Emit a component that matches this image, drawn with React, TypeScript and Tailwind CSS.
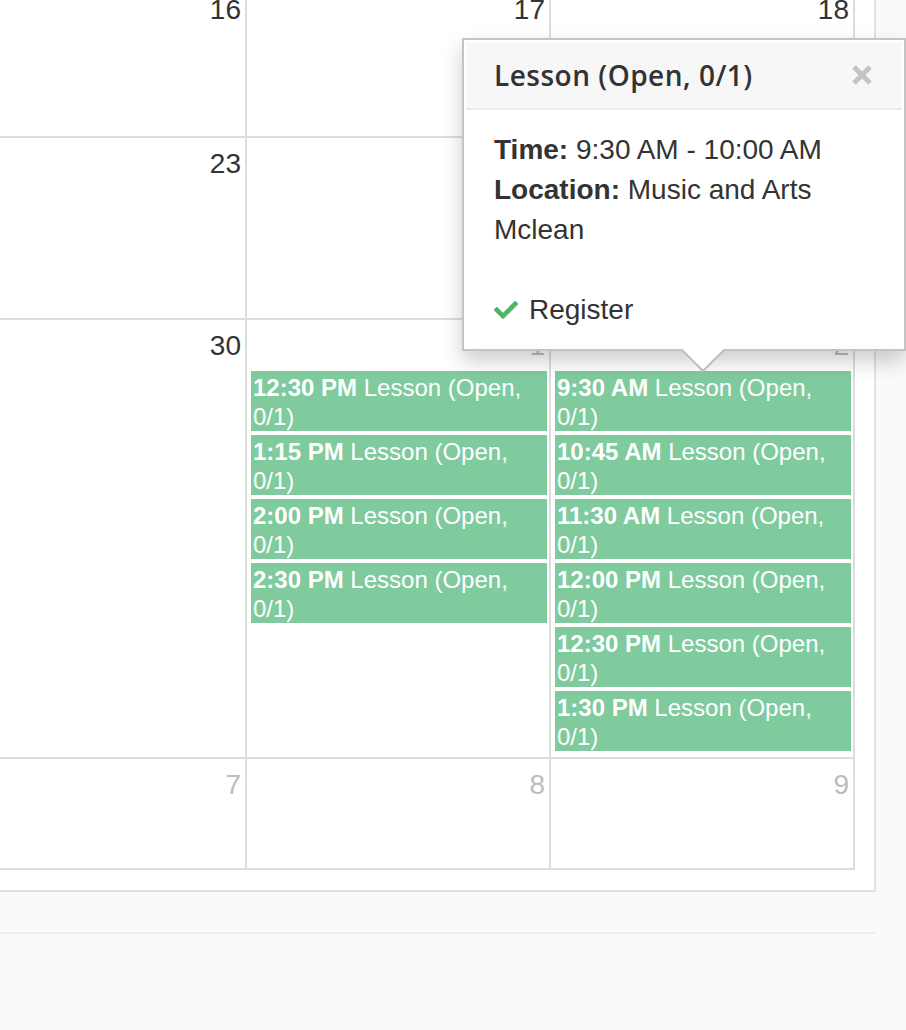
import React from 'react';
import { FaCheck } from 'react-icons/fa';

type Day = { n: string; muted?: boolean; events?: string[] };

const weeks: { cell: string; days: Day[] }[] = [
    { cell: 'h-[154px]', days: [{ n: '16' }, { n: '17' }, { n: '18' }] },
    { cell: 'h-[182px]', days: [{ n: '23' }, { n: '' }, { n: '' }] },
    {
        cell: 'h-[439px]',
        days: [
            { n: '30' },
            { n: '1', muted: true, events: ['12:30 PM', '1:15 PM', '2:00 PM', '2:30 PM'] },
            {
                n: '2',
                muted: true,
                events: ['9:30 AM', '10:45 AM', '11:30 AM', '12:00 PM', '12:30 PM', '1:30 PM'],
            },
        ],
    },
    { cell: 'h-[111px]', days: [{ n: '7', muted: true }, { n: '8', muted: true }, { n: '9', muted: true }] },
];

const DayCell: React.FC<{ day: Day; cell: string }> = ({ day, cell }) => (
    <div className={`${cell} w-[304px] border-l-2 border-t-2 border-[#dddddd]`}>
        <div
            className={`pt-[6px] pr-[4px] text-right text-[28px] leading-[40px] ${
                day.muted ? 'text-[#bdbdbd]' : 'text-[#333333]'
            }`}
        >
            {day.n || '\u00a0'}
        </div>
        {day.events && (
            <div className="mt-[5px] flex flex-col gap-[4px] pl-[4px] pr-[2px]">
                {day.events.map((time, i) => (
                    <div
                        key={i}
                        className="h-[60px] overflow-hidden bg-[#7fcb9e] px-[2px] pt-[2px] text-[24px] leading-[29px] text-white"
                    >
                        <span className="font-bold">{time}</span> Lesson (Open, 0/1)
                    </div>
                ))}
            </div>
        )}
    </div>
);

const EventPopover: React.FC = () => (
    <div className="absolute left-[462px] top-[38px] w-[444px] border-2 border-[#c4c4c4] bg-white p-[2px] shadow-[0_10px_20px_rgba(0,0,0,0.2)]">
        <div className="flex h-[68px] items-center justify-between border-b-2 border-[#ebebeb] bg-[#f7f7f7] pl-[28px] pr-[30px]">
            <span className="font-['Open_Sans',sans-serif] text-[28px] font-semibold tracking-[0.5px] text-[#333333]">
                Lesson (Open, 0/1)
            </span>
            <svg width="20" height="20" viewBox="0 0 20 20">
                <path d="M2 2 L18 18 M18 2 L2 18" stroke="#c4c4c4" strokeWidth="5" />
            </svg>
        </div>
        <div className="px-[28px] pt-[20px] pb-[17px] text-[28px] leading-[40px] text-[#333333]">
            <div>
                <span className="font-bold">Time:</span> 9:30 AM - 10:00 AM
            </div>
            <div>
                <span className="font-bold">Location:</span> Music and Arts Mclean
            </div>
            <div>&nbsp;</div>
            <div className="flex items-center gap-[11px]">
                <FaCheck className="h-[24px] w-[24px] text-[#4cb962]" />
                <span>Register</span>
            </div>
        </div>
        <svg className="absolute left-[217px] top-full" width="44" height="23" viewBox="0 0 44 23">
            <path d="M0 0 L22 22 L44 0" fill="#ffffff" stroke="#bdbdbd" strokeWidth="2" />
        </svg>
    </div>
);

export default function App() {
    return (
        <div className="relative h-[1030px] w-[906px] overflow-hidden bg-[#fafafa] font-['Liberation_Sans',Arial,sans-serif]">
            <div className="-ml-[79px] -mt-[18px] w-fit border-b-2 border-r-2 border-[#e2e2e2] bg-white pb-[20px] pl-[20px] pr-[19px]">
                <div className="border-b-2 border-r-2 border-[#dddddd]">
                    {weeks.map((w, i) => (
                        <div key={i} className="flex">
                            {w.days.map((d, j) => (
                                <DayCell key={j} day={d} cell={w.cell} />
                            ))}
                        </div>
                    ))}
                </div>
            </div>
            <div className="mt-[40px] h-[2px] w-[876px] bg-[#eeeeee]" />
            <EventPopover />
        </div>
    );
}
